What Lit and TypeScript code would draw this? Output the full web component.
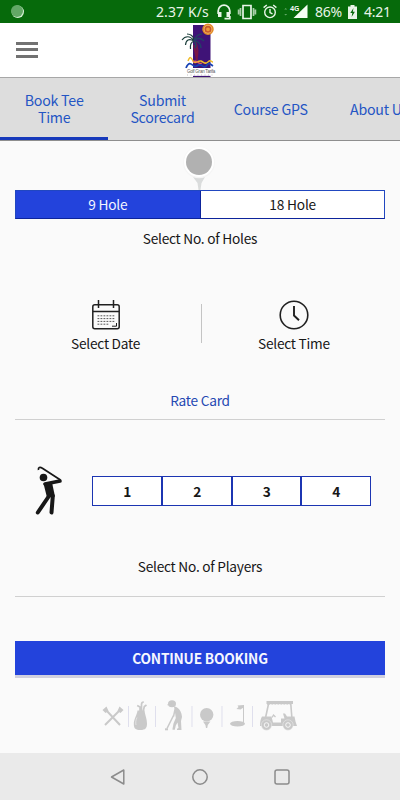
import { LitElement, html, css } from "lit";
import { customElement, state } from "lit/decorators.js";

const base = css`
  :host { display: block; box-sizing: border-box; }
  * { box-sizing: border-box; }
  svg { display: block; flex: none; overflow: visible; }
`;

@customElement("status-bar")
class StatusBar extends LitElement {
  static styles = [base, css`
    :host { height: 23px; background: #066a0b; color: #e9f5e9; }
    .bar { display: flex; height: 23px; align-items: center; padding: 0 9px 0 10px; font: 14px/23px "Noto Sans", sans-serif; }
    .grow { flex: 1; }
    .speed { width: 53px; margin-right: 8px; white-space: nowrap; letter-spacing: .1px; }
    .pct { width: 28px; margin-left: 7px; margin-right: 5px; white-space: nowrap; }
    .time { width: 27px; margin-left: 7px; white-space: nowrap; }
    .gap { margin-left: 7px; }
  `];
  render() {
    return html`<div class="bar">
      <svg width="15" height="15" viewBox="0 0 15 15"><circle cx="7.8" cy="7.8" r="6.2" fill="#d5f0d5"/><circle cx="7" cy="7" r="6" fill="#62a866"/></svg>
      <span class="grow"></span>
      <span class="speed">2.37 K/s</span>
      <svg width="14" height="16" viewBox="0 0 14 16" fill="none" stroke="#e9f5e9" stroke-width="1.8"><path d="M1.2 10V7a5.8 5.8 0 0 1 11.6 0v3M7.500 14.600h5.300V12"/><path d="M1 8h3.500v5H1zM9.500 8H13v5H9.500z" fill="#e9f5e9" stroke="none"/></svg>
      <svg class="gap" width="18" height="16" viewBox="0 0 18 16" stroke="#e9f5e9" fill="none" stroke-width="1.7"><path d="M5 1.500h8v13H5z"/><path d="M2.500 4v8M15.500 4v8M.6 5.500v5M17.400 5.500v5" stroke="#a8cfa9"/></svg>
      <svg class="gap" width="14" height="15" viewBox="0 0 14 15" stroke="#e9f5e9" fill="none" stroke-width="1.400"><circle cx="7" cy="8.300" r="5.300"/><path d="M7 5v3.500l2.500 1.300M.6 3.600 3.800 1M13.400 3.600 10.200 1"/></svg>
      <svg class="gap" width="24" height="15" viewBox="0 0 24 15"><path d="M.2 5.500 1.700 4l1.500 1.500zM.2 10l1.500 1.500L3.200 10z" fill="#62a866"/><path d="M9.500 14 23.500.500V14z" fill="#f5fff5"/><text x="6" y="7.300" font-family="Noto Sans" font-size="7.500" font-weight="600" fill="#fff" textLength="9" lengthAdjust="spacingAndGlyphs">4G</text></svg>
      <span class="pct">86%</span>
      <svg width="9" height="14" viewBox="0 0 9 14"><path d="M2.500 0h4v1.500H9V14H0V1.500h2.500z" fill="#e9f5e9"/><path d="M5.500 3 2.300 8h2L3.600 12l3.300-5.300H4.800z" fill="#066a0b"/></svg>
      <span class="time">4:21</span>
    </div>`;
  }
}

@customElement("app-header")
class AppHeader extends LitElement {
  static styles = [base, css`
    :host { height: 55px; background: #fff; border-bottom: 1px solid #a7a7a7; }
    .row { display: grid; grid-template-columns: 1fr 40px 1fr; height: 54px; }
    .menu { display: flex; flex-direction: column; gap: 3.500px; padding: 18.800px 0 0 16px; }
    .menu i { display: block; width: 22px; height: 3px; background: #727272; }
  `];
  render() {
    return html`<div class="row">
      <div class="menu"><i></i><i></i><i></i></div>
      <svg width="40" height="54" viewBox="180 23 40 54">
        <path d="M193 25h17.500v43H193zM193 75.800h17.500V77H193z" fill="#3f1377"/>
        <path d="M195 41c3 7 3 11 1.500 19M194 45l3 15" stroke="#7b1745" stroke-width="2" fill="none"/>
        <path d="M194 41c-4-6-9-5-12-1M194 41c-5-3-8-1-8.500 4M194 41c-3 1-4 4-3.500 8M194 40c-1-5-4-6-7-6" stroke="#193d39" stroke-width="1.200" fill="none"/>
        <path d="M194 41c2-6 5-7 8-7M194 41c3-4 7-3 10 0M195 41c4 0 6 4 6 7M194 41c2 2 2 5 1 7" stroke="#263d67" stroke-width="1.700" fill="none"/>
        <circle cx="208" cy="29.300" r="5" stroke="#e28b28" stroke-width="1.500" fill="#f6bb70"/><circle cx="208" cy="29.300" r="2.700" stroke="#c95b28" stroke-width="1.600" fill="#ef9a3b"/>
        <path d="M188 61c2-5 3-4 5 0s5-1 8 0 4 4 7 1 3 0 5 0" stroke="#f0bc28" stroke-width="1.500" fill="none"/>
        <path d="M186 68c3-7 5-4 8-2s4-3 7-1 4 3 6 0 3-1 6 1" stroke="#1742b4" stroke-width="1.700" fill="none"/>
        <path d="M193 62c4-3 5 3 9 1" stroke="#ed6d58" stroke-width="1.300" fill="none"/>
        <rect x="186" y="68.500" width="30" height="7" fill="#fff"/>
        <text x="187" y="73" font-family="Liberation Sans" font-size="5" fill="#555" textLength="28" lengthAdjust="spacingAndGlyphs">Golf Gran Tarifa</text>
        <path d="M187 75h28" stroke="#aaa" stroke-width=".7" stroke-dasharray="1 2.500"/>
      </svg>
    </div>`;
  }
}

@customElement("tab-strip")
class TabStrip extends LitElement {
  static styles = [base, css`
    :host { height: 63px; background: #ddd; border-bottom: 1px solid #8e8e8e; overflow: hidden; }
    .tabs { display: flex; height: 62px; }
    .tab { flex: none; width: 108.300px; display: flex; align-items: center; justify-content: center; text-align: center; padding-top: 3px;
      color: #2455c4; font: 14.200px/17px "Noto Sans CJK SC", sans-serif; border-bottom: 3px solid transparent; white-space: pre; }
    .active { border-color: #1739bb; }
  `];
  render() {
    return html`<div class="tabs"><div class="tab active">Book Tee
Time</div><div class="tab">Submit
Scorecard</div><div class="tab">Course GPS</div><div class="tab">About Us</div></div>`;
  }
}

@customElement("footer-art")
class FooterArt extends LitElement {
  static styles = [base];
  render() {
    return html`<svg width="200" height="36" viewBox="100 700 200 36" fill="#c9c9c9" stroke="#c9c9c9">
      <g stroke-width="2"><path d="m106 711 14 15M120 711l-15 15"/><path d="m102.500 711 4-3.500 2 4.500-3 2zM123.500 711l-4-3.500-2 4.500 3 2z" stroke="none"/></g>
      <path d="M128.500 707v21M155.500 707v21M192 707v21M222 707v21M252.500 707v21" stroke="#dfdfed" stroke-width="1"/>
      <path d="M137.500 711.500h7c.3 4 2.500 8 2.500 13 0 4.500-1.500 6.500-6.500 6.500s-6.700-1.500-6.700-6c0-5 3.200-9 3.700-13.500z" stroke="none"/>
      <path d="M140 712v-4l-2.800-1.500M141.500 712v-6.500c0-1.500.8-2.500 2.300-2.500M143.300 712l1-4.500 2.200-1.500" fill="none" stroke-width="1.700"/>
      <path d="M137 718.500c-1.200 2.500-1.600 5-1 7.500" fill="none" stroke="#ededed" stroke-width=".7"/>
      <ellipse cx="172" cy="704.800" rx="4" ry="3.500" stroke="none"/><path d="m167.500 706 4-1.500" stroke-width="1.300"/>
      <path d="M174 707.500c4.500.5 7.700 4.500 8 10.500l-1 4 .5 9h-4.500v-1.200l1.500-.8-1-5.500-1.700 3-1 4.300h-2.300v-1l1-5.300 2.300-5.500-.8-5.500z" stroke="none"/>
      <path d="m175 710.500-1.500 7M173.500 716.500l-6.500 13" fill="none" stroke-width="1.500"/><path d="M165 729.300h3v2h-3z" stroke="none"/>
      <circle cx="206.700" cy="715.800" r="6.700" stroke="none"/><path d="M203 722.500h7.400l-2.600 3.500-.6 3h-1.200l-.6-3z" stroke="none"/>
      <ellipse cx="237.500" cy="724.800" rx="7.500" ry="2.800" stroke="none"/><path d="M243.500 706v19" stroke-width="1"/><path d="m243.500 706-6 .5 1 1.500-2 2 4 .5 3-2z" stroke="none"/>
      <path d="M266.500 702h26.500v3h-26.500z" stroke="none"/><path d="M267 705c1 1 2 1 3 0s2 1 3 0 2 1 3 0 2 1 3 0 2 1 3 0 2 1 3 0 2 1 3 0 2 1 3 0" stroke-width=".7"/>
      <path d="m268.500 705-2.800 13M290.800 705l1 13" fill="none" stroke-width="1.600"/>
      <path d="M262 717.500h9.500l1.500 6h8v-4h3.500l-1.500-5h2l2 3h7.500l1 5 1.500 4.500h-37c0-4 .5-7 2-9.500z" stroke="none"/><path d="m272 718.500 1.500-2.500 2 2" fill="none" stroke-width="1.300"/>
      <circle cx="266.500" cy="726" r="5.200" stroke="#eee" stroke-width=".5"/><circle cx="288" cy="726" r="5.200" stroke="#eee" stroke-width=".5"/><circle cx="266.500" cy="726" r="2.300" fill="none" stroke="#fafafa" stroke-width=".9"/><circle cx="288" cy="726" r="2.300" fill="none" stroke="#fafafa" stroke-width=".9"/>
    </svg>`;
  }
}

@customElement("app-root")
class AppRoot extends LitElement {
  @state() private holes = 9;
  static styles = [base, css`
    :host { width: 400px; height: 800px; overflow: hidden; background: #fafafa; color: #171717; font: 13.700px/20px "Noto Sans CJK SC", sans-serif; letter-spacing: -.25px; }
    .page { display: flex; flex-direction: column; height: 800px; }
    main { display: flex; flex-direction: column; height: 612px; padding: 0 14.700px; }
    .pin { margin: 5px auto 0 167px; height: 44px; }
    .seg { display: grid; grid-template-columns: 1fr 1fr; height: 29px; border: 1px solid #2147c0; background: #fff; border-bottom-color: #0d249b; }
    button { font: inherit; letter-spacing: inherit; border: 0; border-radius: 0; background: none; color: inherit; padding: 0; }
    .hole { line-height: 27px; letter-spacing: -.2px; }
    .hole + .hole { border-left: 1px solid #0d249b; }
    .on { background: #2343dc; color: #f4f6ff; }
    .caption { text-align: center; }
    .c1 { margin-top: 9px; }
    .pick { display: grid; grid-template-columns: 1fr 1px 1fr; height: 55px; margin-top: 52px; }
    .choice { display: flex; flex-direction: column; align-items: center; }
    .choice svg { margin-bottom: 3px; }
    .left { padding-right: 3px; }
    .right { padding-left: 2px; }
    .line { background: #c4c4c4; height: 39px; width: 1px; margin: 4px 0 0 1.500px; }
    .rate { text-align: center; color: #2548b2; margin-top: 35px; height: 20px; }
    .rule { height: 1px; background: #d0d0d0; flex: none; }
    .r1 { margin-top: 9px; }
    .players { display: flex; align-items: center; height: 50px; margin: 46px 0 0 20px; }
    .nums { display: grid; grid-template-columns: 68.500px 69.500px 69.500px 1fr; width: 279px; height: 30px; margin: 0 0 0 29.300px; border: 1px solid #1c35b2; background: #fff; }
    .num { font-weight: 700; line-height: 28px; }
    .num + .num { border-left: 2px solid #1c35b2; }
    .c2 { margin-top: 40px; }
    .r2 { margin-top: 20px; }
    .cta { flex: none; height: 34px; margin-top: 44px; background: #2343dc; color: #f6f7ff; font-weight: 700; box-shadow: 0 3px 0 #d0d0df; letter-spacing: -.2px; }
    .art { align-self: center; margin-top: 24px; }
    nav { display: flex; justify-content: center; gap: 66px; align-items: center; height: 47px; background: #eaeaea; }
  `];
  render() {
    return html`<div class="page">
      <status-bar></status-bar><app-header></app-header><tab-strip></tab-strip>
      <main>
        <svg class="pin" width="34" height="44" viewBox="0 0 34 44"><path d="M11 31h12l-3.500 6-1 7h-2l-1-7z" fill="#dadcdc"/><circle cx="17" cy="16.500" r="15.800" fill="#f5f5f5"/><circle cx="17" cy="16" r="15" fill="#fff"/><circle cx="17" cy="16" r="13" fill="#b1b1b1"/></svg>
        <div class="seg">${[9, 18].map(n => html`<button class="hole ${n === this.holes ? "on" : ""}" @click=${() => { this.holes = n; }}>${n} Hole</button>`)}</div>
        <div class="caption c1">Select No. of Holes</div>
        <div class="pick">
          <div class="choice left"><svg width="28" height="30" viewBox="0 0 28 30" fill="none" stroke="#202020" stroke-width="1.500"><rect x=".8" y="4.800" width="26.400" height="24" rx="2"/><path d="M1 11.500h26M6.500 0v8M21.500 0v8"/><path d="M5.500 15.800h17M5.500 18.600h17M5.500 21.400h17M5.500 24.200h11" stroke-width="1" stroke-dasharray="1.800 1.200" stroke="#555"/><path d="M20 26.200h4.500V23" stroke-width="1"/></svg>Select Date</div>
          <div class="line"></div>
          <div class="choice right"><svg width="30" height="30" viewBox="0 0 30 30" fill="none" stroke="#202020" stroke-width="1.600"><circle cx="15" cy="15" r="13.800"/><path d="M15 6v9.500l5 4.800" stroke-width="1.900"/></svg>Select Time</div>
        </div>
        <div class="rate">Rate Card</div><div class="rule r1"></div>
        <div class="players">
          <svg width="28" height="50" viewBox="0 0 28 50" stroke="#171717" fill="none"><path d="M3.500 4C3 1.500 5 .5 7 2l18.500 12" stroke-width="1.700"/><circle cx="8.500" cy="11.500" r="3.800" fill="#171717" stroke="none"/><path d="m10 18 15-3" stroke-width="3.600" stroke-linecap="round"/><path d="m8.500 17.500 8.500-1 3 14-8 1z" fill="#171717" stroke="none"/><path d="M14 30 2.800 46.500M17.800 30l-1.300 16.500" stroke-width="4" stroke-linecap="round"/></svg>
          <div class="nums">${[1, 2, 3, 4].map(n => html`<button class="num">${n}</button>`)}</div>
        </div>
        <div class="caption c2">Select No. of Players</div><div class="rule r2"></div>
        <button class="cta">CONTINUE BOOKING</button>
        <footer-art class="art"></footer-art>
      </main>
      <nav>
        <svg width="16" height="16" viewBox="0 0 16 16" fill="none" stroke="#8c8c8c" stroke-width="1.500"><path d="M13.800 1v14L1.500 8z" stroke-linejoin="round"/></svg>
        <svg width="16" height="16" viewBox="0 0 16 16" fill="none" stroke="#8c8c8c" stroke-width="1.500"><circle cx="8" cy="8" r="7.200"/></svg>
        <svg width="16" height="16" viewBox="0 0 16 16" fill="none" stroke="#8c8c8c" stroke-width="1.500"><rect x="1" y="1" width="14" height="14" rx="2"/></svg>
      </nav>
    </div>`;
  }
}
